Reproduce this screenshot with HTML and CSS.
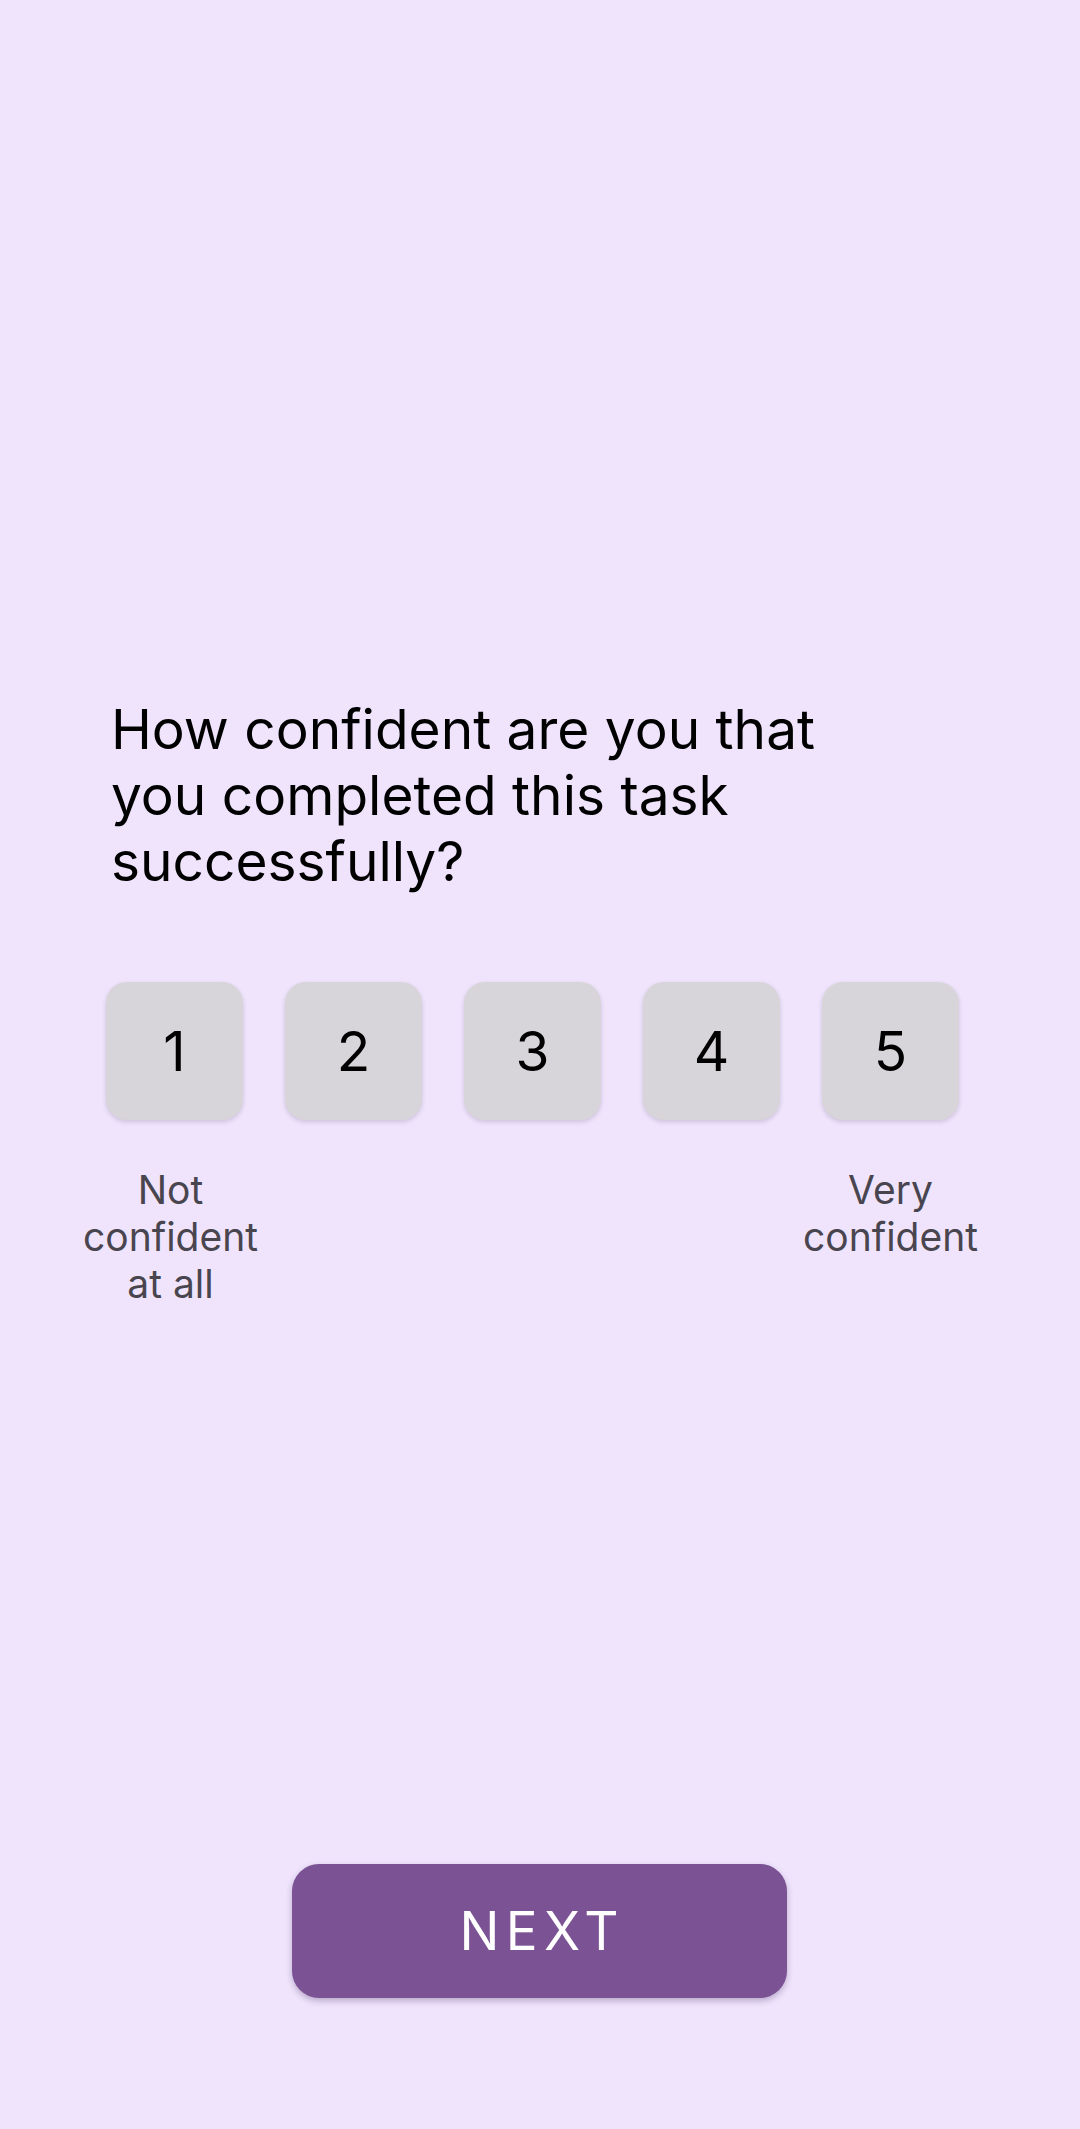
FILE: index.html
```html
<!DOCTYPE html>
<html>
<head>
<meta charset="utf-8">
<link rel="stylesheet" href="styles.css">
</head>
<body>
<main class="screen">
  <h1 class="question">How confident are you that you completed this task successfully?</h1>
  <div class="scale">
    <button class="opt">1</button>
    <button class="opt">2</button>
    <button class="opt">3</button>
    <button class="opt">4</button>
    <button class="opt">5</button>
  </div>
  <div class="labels">
    <div class="cell"><span class="lbl lbl-low">Not confident at all</span></div>
    <div class="cell"></div>
    <div class="cell"></div>
    <div class="cell"></div>
    <div class="cell"><span class="lbl">Very confident</span></div>
  </div>
  <div class="footer">
    <button class="next">NEXT</button>
  </div>
</main>
</body>
</html>
```

FILE: styles.css
```css
html, body {
  margin: 0;
  padding: 0;
  background: #EFE4FC;
}
body {
  width: 1080px;
  height: 2129px;
  overflow: hidden;
  font-family: Inter, "Noto Sans", sans-serif;
}
.screen {
  display: flex;
  flex-direction: column;
  padding-top: 696px;
}
.question {
  margin: 0;
  padding-left: 111px;
  width: 760px;
  font-size: 55px;
  line-height: 66px;
  font-weight: 400;
  color: #000;
}
.scale {
  display: flex;
  gap: 42px;
  margin-top: 88px;
  padding-left: 106px;
}
.opt {
  width: 137px;
  height: 138px;
  border: none;
  border-radius: 21px;
  background: #D8D5DA;
  box-shadow: 0 2px 4px rgba(60, 40, 80, 0.18);
  font-family: Inter, "Noto Sans", sans-serif;
  font-size: 55px;
  color: #000;
  padding: 0;
}
.labels {
  display: flex;
  gap: 42px;
  padding-left: 106px;
  margin-top: 46px;
}
.cell {
  width: 137px;
  display: flex;
  justify-content: center;
}
.lbl {
  flex: none;
  width: 210px;
  text-align: center;
  font-size: 39px;
  line-height: 47px;
  color: #49454F;
}
.lbl-low {
  margin-right: 8px;
}
.footer {
  display: flex;
  justify-content: center;
  position: fixed;
  left: 0;
  right: 0;
  top: 1864px;
}
.next {
  width: 495px;
  height: 134px;
  margin-right: 2px;
  border: none;
  border-radius: 27px;
  background: #7B5294;
  color: #fff;
  font-family: Inter, "Noto Sans", sans-serif;
  font-size: 53px;
  letter-spacing: 0.12em;
  padding: 0 0 0 0.12em;
  box-shadow: 0 3px 6px rgba(50, 20, 80, 0.28);
}
```
